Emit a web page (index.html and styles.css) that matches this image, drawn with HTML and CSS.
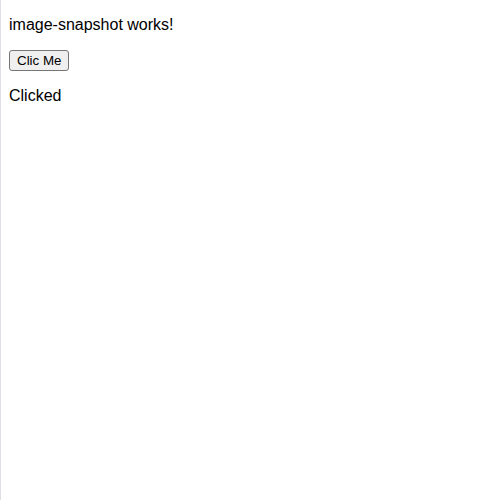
FILE: index.html
```html
<!DOCTYPE html>
<html>
<head>
<meta charset="utf-8">
<link rel="stylesheet" href="styles.css">
</head>
<body class="page">
<p class="title">image-snapshot works!</p>
<button class="btn">Clic Me</button>
<p class="status">Clicked</p>
</body>
</html>
```

FILE: styles.css
```css
html {
  border-left: 1px solid #dde0e4;
  min-height: 100%;
}
.page {
  margin: 0 8px 8px 8px;
  font-family: "Liberation Sans", Arial, sans-serif;
  font-size: 16px;
  color: #000;
  background: #fff;
}
.title, .status {
  margin: 16px 0;
}
.btn {
  font-family: "Liberation Sans", Arial, sans-serif;
  font-size: 13.333px;
  line-height: 15px;
  padding: 2px 7px;
  border: 1px solid #767676;
  border-radius: 3px;
  background: #efefef;
  color: #000;
}
```
